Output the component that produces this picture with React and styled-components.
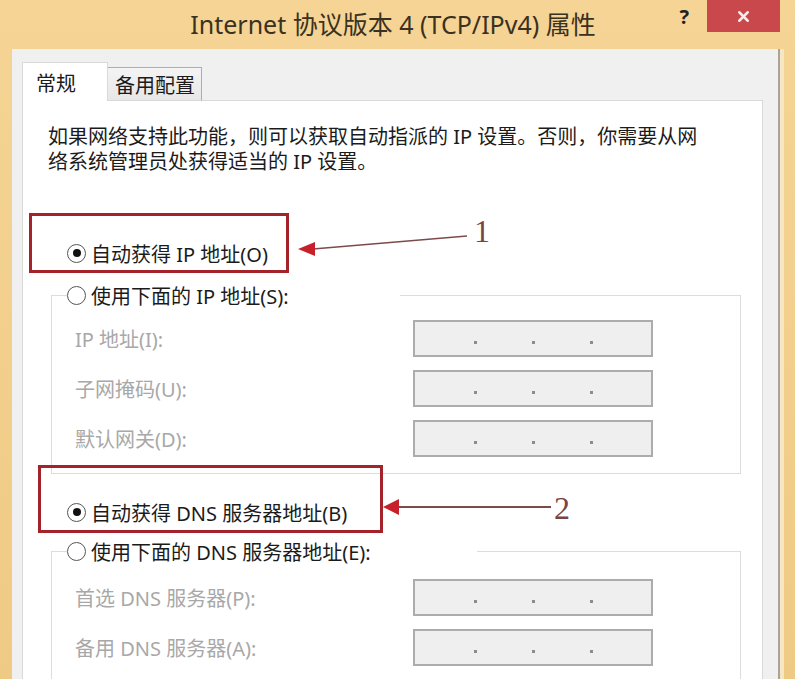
import React from "react";
import styled, { createGlobalStyle } from "styled-components";
import { X } from "lucide-react";

const GlobalStyle = createGlobalStyle`
  html, body {
    margin: 0;
    padding: 0;
  }
  body {
    width: 795px;
    height: 679px;
    overflow: hidden;
    font-family: "Noto Sans", "Noto Sans CJK SC", sans-serif;
    background: #f2cf8d;
  }
`;

// window frame
const Window = styled.div`
  display: flex;
  flex-direction: column;
  width: 795px;
  height: 679px;
  overflow: hidden;
  background: linear-gradient(#f5d495, #efca85);
`;

const TitleBar = styled.header`
  display: grid;
  grid-template-columns: 1fr auto 1fr;
  align-items: start;
  height: 49px;
  padding-right: 9px;
  flex-shrink: 0;
`;

const Title = styled.h1`
  grid-column: 2;
  margin: 0;
  font-size: 25px;
  font-weight: 400;
  line-height: 48px;
  color: #3a3120;
  white-space: nowrap;
`;

const Controls = styled.div`
  display: flex;
  justify-content: flex-end;
  align-items: flex-start;
  gap: 18px;
  padding-right: 6px;
`;

const Help = styled.span`
  margin-top: 3px;
  font-size: 20px;
  font-weight: 700;
  color: #222;
`;

const CloseButton = styled.button`
  display: flex;
  align-items: center;
  justify-content: center;
  width: 73px;
  height: 32px;
  padding: 0;
  border: 0;
  background: #c9484c;
  color: #fbeaea;
`;

const Body = styled.main`
  display: flex;
  flex-direction: column;
  margin: 0 15px 0 12px;
  padding: 13px 15px 0 10px;
  background: #f0f0f0;
  border-right: 2px solid #a9a39a;
  box-shadow: 4px 0 0 #f6e6c4;
  min-height: 0;
  flex: 1;
`;

// tabs
const TabList = styled.div`
  display: flex;
  align-items: flex-end;
  margin-bottom: -1px;
  position: relative;
  z-index: 1;
`;

const Tab = styled.div`
  box-sizing: border-box;
  display: flex;
  align-items: center;
  height: ${(p) => (p.$active ? 39 : 34)}px;
  padding: ${(p) => (p.$active ? "0 31px 0 13px" : "0 6px 0 7px")};
  font-size: 20px;
  color: #1b1b1b;
  background: ${(p) => (p.$active ? "#fff" : "linear-gradient(#f4f4f4, #e7e7e7)")};
  border: 1px solid ${(p) => (p.$active ? "#d9d9d9" : "#adadad")};
  border-left: ${(p) => (p.$active ? "1px solid #d9d9d9" : "none")};
  border-bottom: ${(p) => (p.$active ? "none" : "1px solid #d9d9d9")};
`;

const Panel = styled.section`
  position: relative;
  display: flex;
  flex-direction: column;
  align-items: flex-start;
  background: #fff;
  border: 1px solid #d9d9d9;
`;

const Intro = styled.p`
  margin: 23px 0 0 25px;
  font-size: 20px;
  line-height: 25px;
  color: #1b1b1b;
`;

// radio options
const Option = styled.label`
  display: flex;
  align-items: center;
  gap: 5px;
  height: 20px;
  margin: ${(p) => p.$top}px 0 0 44px;
  font-size: 20px;
  color: #1b1b1b;
  white-space: nowrap;
`;

const Radio = styled.span`
  box-sizing: border-box;
  display: grid;
  place-items: center;
  flex-shrink: 0;
  width: 19px;
  height: 19px;
  border: 1.5px solid #565656;
  border-radius: 50%;
  background: #fff;
  &::after {
    content: "";
    width: 8px;
    height: 8px;
    border-radius: 50%;
    background: ${(p) => (p.$checked ? "#111" : "transparent")};
  }
`;

const Group = styled.fieldset`
  box-sizing: border-box;
  display: flex;
  flex-direction: column;
  gap: 13px;
  width: 690px;
  min-width: 0;
  margin: ${(p) => p.$top}px 0 0 28px;
  padding: ${(p) => p.$padTop}px 0 ${(p) => p.$padBottom}px 15px;
  border: 1px solid #dcdcdc;
`;

const Legend = styled.legend`
  box-sizing: border-box;
  display: flex;
  align-items: center;
  gap: 5px;
  width: ${(p) => p.$width}px;
  height: 20px;
  padding: 0;
  font-size: 20px;
  color: #1b1b1b;
  white-space: nowrap;
`;

const Field = styled.div`
  display: grid;
  grid-template-columns: 338px 240px;
  align-items: center;
  margin-left: 8px;
`;

const FieldLabel = styled.span`
  font-size: 20px;
  color: #a8a8a8;
  white-space: nowrap;
`;

const IpBox = styled.div`
  box-sizing: border-box;
  display: flex;
  justify-content: center;
  align-items: center;
  gap: 55px;
  height: 37px;
  border: 2px solid #acacac;
  background: #efefef;
`;

const Dot = styled.i`
  width: 3px;
  height: 3px;
  margin-top: 8px;
  background: #8c8c8c;
`;

// annotations drawn over the dialog
const Highlight = styled.div`
  position: absolute;
  left: ${(p) => p.$x}px;
  top: ${(p) => p.$y}px;
  width: ${(p) => p.$w}px;
  height: ${(p) => p.$h}px;
  box-sizing: border-box;
  border: 3px solid #a4232b;
  pointer-events: none;
`;

const Pointer = styled.svg`
  position: absolute;
  left: ${(p) => p.$x}px;
  top: ${(p) => p.$y}px;
  overflow: visible;
`;

const Marker = styled.span`
  position: absolute;
  left: ${(p) => p.$x}px;
  top: ${(p) => p.$y}px;
  font-family: "Liberation Serif", serif;
  font-size: 32px;
  line-height: 32px;
  color: #7b4444;
`;

const IpInput = () => (
  <IpBox>
    <Dot />
    <Dot />
    <Dot />
  </IpBox>
);

const ipFields = ["IP 地址(I):", "子网掩码(U):", "默认网关(D):"];
const dnsFields = ["首选 DNS 服务器(P):", "备用 DNS 服务器(A):"];

export default function App() {
  return (
    <>
      <GlobalStyle />
      <Window>
        <TitleBar>
          <Title>Internet 协议版本 4 (TCP/IPv4) 属性</Title>
          <Controls>
            <Help>?</Help>
            <CloseButton>
              <X size={17} strokeWidth={3.5} />
            </CloseButton>
          </Controls>
        </TitleBar>
        <Body>
          <TabList>
            <Tab $active>常规</Tab>
            <Tab>备用配置</Tab>
          </TabList>
          <Panel>
            <Intro>
              如果网络支持此功能，则可以获取自动指派的 IP 设置。否则，你需要从网
              <br />
              络系统管理员处获得适当的 IP 设置。
            </Intro>

            <Option $top={69}>
              <Radio $checked />
              自动获得 IP 地址(O)
            </Option>

            <Group $top={22} $padTop={15} $padBottom={16}>
              <Legend $width={333}>
                <Radio />
                使用下面的 IP 地址(S):
              </Legend>
              {ipFields.map((f) => (
                <Field key={f}>
                  <FieldLabel>{f}</FieldLabel>
                  <IpInput />
                </Field>
              ))}
            </Group>

            <Option $top={28}>
              <Radio $checked />
              自动获得 DNS 服务器地址(B)
            </Option>

            <Group $top={19} $padTop={18} $padBottom={40}>
              <Legend $width={410}>
                <Radio />
                使用下面的 DNS 服务器地址(E):
              </Legend>
              {dnsFields.map((f) => (
                <Field key={f}>
                  <FieldLabel>{f}</FieldLabel>
                  <IpInput />
                </Field>
              ))}
            </Group>

            <Highlight $x={6} $y={112} $w={260} $h={60} />
            <Pointer $x={275} $y={131} width="172" height="24" viewBox="0 0 172 24">
              <line x1="15" y1="17" x2="169" y2="4" stroke="#7d4a4a" strokeWidth="1.6" />
              <polygon points="0,17 17,10 17,24" fill="#c8202a" />
            </Pointer>
            <Marker $x={451} $y={114}>1</Marker>

            <Highlight $x={15} $y={364} $w={345} $h={68} />
            <Pointer $x={360} $y={396} width="170" height="20" viewBox="0 0 170 20">
              <line x1="14" y1="10" x2="168" y2="10" stroke="#7d4a4a" strokeWidth="2" />
              <polygon points="0,10 16,2 16,18" fill="#c8202a" />
            </Pointer>
            <Marker $x={531} $y={391}>2</Marker>
          </Panel>
        </Body>
      </Window>
    </>
  );
}
